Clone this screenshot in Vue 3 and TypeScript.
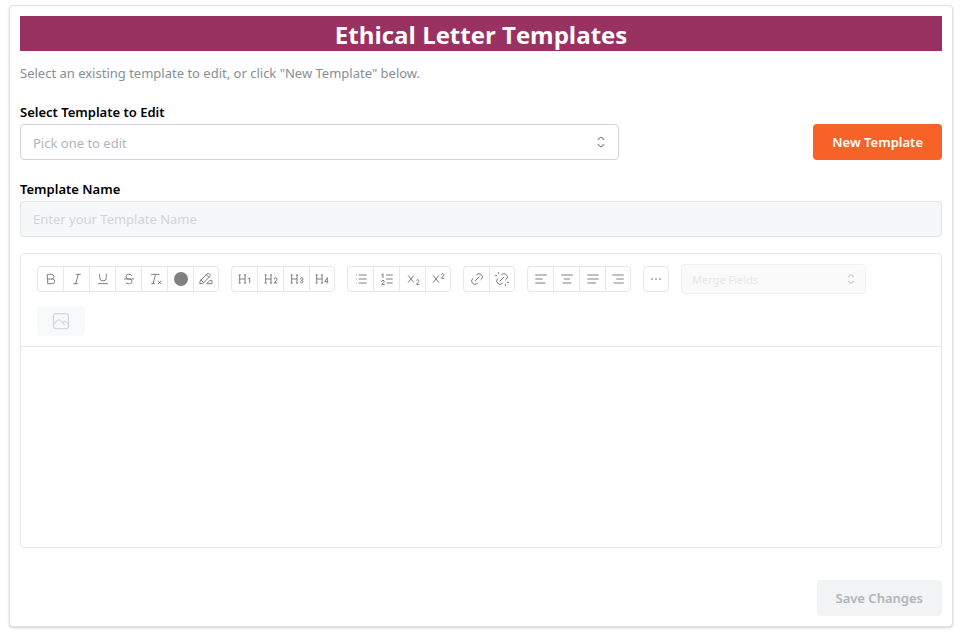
<script setup lang="ts">
import { ref } from 'vue'

interface Tool {
  label: string
  paths?: string
  swatch?: boolean
}

const link = 'M9 15l6-6M11 6l.463-.536a5 5 0 0 1 7.071 7.072L18 13M13 18l-.397.534a5.068 5.068 0 0 1-7.127 0a4.972 4.972 0 0 1 0-7.071L6 11'
const heading = 'M4 6v12M12 6v12M11 18h2M3 18h2M4 12h8M3 6h2M11 6h2'

const groups: Tool[][] = [
  [
    { label: 'Bold', paths: 'M7 5h6a3.5 3.5 0 0 1 0 7h-6zM13 12h1a3.5 3.5 0 0 1 0 7h-7v-7' },
    { label: 'Italic', paths: 'M11 5h6M7 19h6M14 5l-4 14' },
    { label: 'Underline', paths: 'M7 5v5a5 5 0 0 0 10 0v-5M5 19h14' },
    { label: 'Strikethrough', paths: 'M5 12h14M16 6.5a4 2 0 0 0-4-1.5h-1a3.5 3.5 0 0 0 0 7h2a3.5 3.5 0 0 1 0 7h-1.5a4 2 0 0 1-4-1.5' },
    { label: 'Clear formatting', paths: 'M17 15l4 4m0-4l-4 4M7 6V5h11v1M7 19h4M13 5L9 19' },
    { label: 'Text color', swatch: true },
    { label: 'Highlight', paths: 'M3 19h4l10.5-10.5a2.828 2.828 0 1 0-4-4l-10.5 10.5v4M12.5 5.5l4 4M4.5 13.5l4 4M21 15v4h-8l4-4z' },
  ],
  [
    { label: 'Heading 1', paths: heading + 'M19 18v-8l-2 2' },
    { label: 'Heading 2', paths: heading + 'M17 12a2 2 0 1 1 4 0c0 .591-.417 1.318-.816 1.858L17 18h4' },
    { label: 'Heading 3', paths: heading + 'M19 14a2 2 0 1 0-2-2M17 16a2 2 0 1 0 2-2' },
    { label: 'Heading 4', paths: heading + 'M20 18v-8l-4 6h5' },
  ],
  [
    { label: 'Bullet list', paths: 'M9 6h11M9 12h11M9 18h11M5 6v.01M5 12v.01M5 18v.01' },
    { label: 'Ordered list', paths: 'M11 6h9M11 12h9M12 18h8M4 16a2 2 0 1 1 4 0c0 .591-.5 1-1 1.5L4 20h4M6 10V4L4 6' },
    { label: 'Subscript', paths: 'M5 7l8 10m-8 0l8-10M21 20h-4l3.5-4a1.73 1.73 0 0 0-3.5-2' },
    { label: 'Superscript', paths: 'M5 7l8 10m-8 0l8-10M21 11h-4l3.5-4a1.73 1.73 0 0 0-3.5-2' },
  ],
  [
    { label: 'Link', paths: link },
    { label: 'Remove link', paths: link + 'M17 22v-2M20 17h2M2 7h2M7 2v2' },
  ],
  [
    { label: 'Align left', paths: 'M4 6h16M4 12h10M4 18h14' },
    { label: 'Align center', paths: 'M4 6h16M8 12h8M6 18h12' },
    { label: 'Justify', paths: 'M4 6h16M4 12h16M4 18h12' },
    { label: 'Align right', paths: 'M4 6h16M10 12h10M6 18h14' },
  ],
  [{ label: 'Horizontal line', paths: 'M5 12h2M17 12h2M11 12h2' }],
]

const selected = ref('')
const templateName = ref('')
const mergeField = ref('')
</script>

<template>
  <main class="page">
    <section class="card">
      <h1 class="title">Ethical Letter Templates</h1>
      <p class="intro">Select an existing template to edit, or click "New Template" below.</p>

      <div class="picker-row">
        <div class="field picker">
          <label for="template-select">Select Template to Edit</label>
          <div class="select-wrap">
            <select id="template-select" v-model="selected" class="control">
              <option value="" disabled>Pick one to edit</option>
            </select>
            <svg class="carets" viewBox="0 0 16 16" aria-hidden="true"><path d="M4.8 5.8L7.2 3.6Q8 3 8.8 3.6L11.2 5.8M4.8 10.2L7.2 12.4Q8 13 8.8 12.4L11.2 10.2" /></svg>
          </div>
        </div>
        <button type="button" class="button primary">New Template</button>
      </div>

      <div class="field">
        <label for="template-name">Template Name</label>
        <input id="template-name" v-model="templateName" class="control" type="text" placeholder="Enter your Template Name" disabled />
      </div>

      <div class="editor">
        <div class="toolbar" role="toolbar" aria-label="Formatting">
          <div v-for="(group, i) in groups" :key="i" class="group">
            <button v-for="tool in group" :key="tool.label" type="button" class="tool" :aria-label="tool.label">
              <span v-if="tool.swatch" class="swatch"></span>
              <svg v-else class="icon" viewBox="0 0 24 24" aria-hidden="true"><path :d="tool.paths" /></svg>
            </button>
          </div>
          <div class="select-wrap merge">
            <select v-model="mergeField" class="control" aria-label="Merge Fields" disabled>
              <option value="" disabled>Merge Fields</option>
            </select>
            <svg class="carets" viewBox="0 0 16 16" aria-hidden="true"><path d="M4.8 5.8L7.2 3.6Q8 3 8.8 3.6L11.2 5.8M4.8 10.2L7.2 12.4Q8 13 8.8 12.4L11.2 10.2" /></svg>
          </div>
          <button type="button" class="image-button" aria-label="Insert image" disabled>
            <svg viewBox="0 0 24 24" aria-hidden="true"><path d="M15 8h.01M3 6a3 3 0 0 1 3-3h12a3 3 0 0 1 3 3v12a3 3 0 0 1-3 3H6a3 3 0 0 1-3-3zM3 16l5-5c.928-.893 2.072-.893 3 0l5 5M14 14l1-1c.928-.893 2.072-.893 3 0l3 3" /></svg>
          </button>
        </div>
        <div class="content" role="textbox" aria-multiline="true" aria-label="Template content"></div>
      </div>

      <div class="footer">
        <button type="button" class="button save" disabled>Save Changes</button>
      </div>
    </section>
  </main>
</template>

<style>
body {
  margin: 0;
  background: #fff;
}
</style>

<style scoped>
* {
  box-sizing: border-box;
}
.page {
  padding: 5px 9px;
  font-family: "Segoe UI", "Noto Sans", "Open Sans", sans-serif;
  font-size: 13px;
  line-height: 20px;
  color: #000;
}
.card {
  padding: 10px;
  border: 1px solid #dee2e6;
  border-radius: 4px;
  background: #fff;
  box-shadow: 0 1px 3px rgba(0, 0, 0, 0.1), 0 1px 2px rgba(0, 0, 0, 0.08);
}
.title {
  margin: 0;
  padding-top: 2px;
  background: #993260;
  color: #fff;
  font-family: "Segoe UI", "Open Sans", "Noto Sans", sans-serif;
  font-size: 24px;
  line-height: 33px;
  font-weight: 700;
  text-align: center;
}
.intro {
  margin: 12px 0 18px;
  color: #868e96;
}
.picker-row {
  display: flex;
  justify-content: space-between;
  align-items: flex-end;
  margin-bottom: 18px;
}
.picker {
  width: 65%;
}
.field label {
  display: block;
  padding-bottom: 1px;
  line-height: 22px;
  font-weight: 600;
}
.control {
  display: block;
  width: 100%;
  height: 36px;
  margin: 0;
  padding: 0 12px;
  border: 1px solid #ced4da;
  border-radius: 4px;
  background: #fff;
  color: #adb5bd;
  font: inherit;
  appearance: none;
}
select.control {
  padding-top: 2px;
}
input.control:disabled {
  background: #f6f7f9;
  border-color: #e1e4e8;
}
.control::placeholder {
  color: #d0d4d8;
  opacity: 1;
}
.select-wrap {
  position: relative;
}
.carets {
  position: absolute;
  top: 10px;
  right: 10px;
  width: 16px;
  height: 16px;
  fill: none;
  stroke: #868e96;
  stroke-width: 1.2;
  pointer-events: none;
}
.button {
  height: 36px;
  padding: 0 19px;
  border: 0;
  border-radius: 4px;
  font: inherit;
  font-weight: 600;
}
.primary {
  background: #f76229;
  color: #fff;
}
.save {
  background: #f1f3f5;
  color: #adb5bd;
}
.editor {
  margin-top: 16px;
  border: 1px solid #e4e7ea;
  border-radius: 4px;
}
.toolbar {
  display: flex;
  flex-wrap: wrap;
  align-items: center;
  gap: 12px;
  padding: 10px 16px;
  border-bottom: 1px solid #e4e7ea;
}
.group {
  display: flex;
}
.tool {
  display: flex;
  align-items: center;
  justify-content: center;
  width: 26px;
  height: 26px;
  padding: 0;
  border: 1px solid #e4e8eb;
  border-right-width: 0;
  background: #fff;
}
.tool:first-child {
  border-radius: 4px 0 0 4px;
}
.tool:last-child {
  border-right-width: 1px;
  border-radius: 0 4px 4px 0;
}
.tool:only-child {
  border-radius: 4px;
}
.icon {
  width: 16px;
  height: 16px;
  fill: none;
  stroke: #808080;
  stroke-width: 1.5;
  stroke-linecap: round;
  stroke-linejoin: round;
}
.swatch {
  width: 14px;
  height: 14px;
  border-radius: 50%;
  background: #808080;
}
.merge {
  width: 185px;
}
.merge .control {
  height: 30px;
  padding: 2px 10px 0;
  border-color: #f0f1f3;
  background: #fafafa;
  color: #e4e7e9;
  font-size: 11px;
  opacity: 1;
}
.merge .carets {
  top: 8px;
  right: 8px;
  width: 14px;
  height: 14px;
  stroke: #c3c6ca;
}
.image-button {
  display: flex;
  align-items: center;
  justify-content: center;
  width: 48px;
  height: 30px;
  padding: 0;
  border: 0;
  border-radius: 4px;
  background: #f8f9fa;
}
.image-button svg {
  width: 20px;
  height: 20px;
  fill: none;
  stroke: #d3d7db;
  stroke-width: 1.5;
  stroke-linecap: round;
  stroke-linejoin: round;
}
.content {
  min-height: 200px;
}
.footer {
  display: flex;
  justify-content: flex-end;
  margin-top: 32px;
}
</style>
